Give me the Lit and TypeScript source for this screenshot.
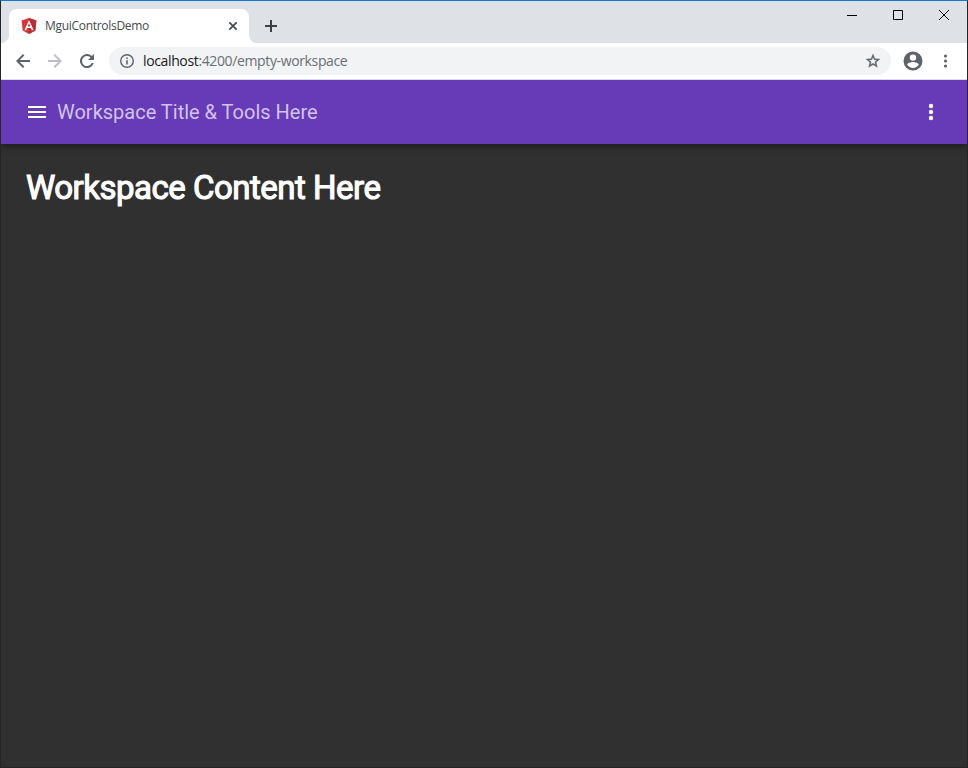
import { LitElement, html, css } from "lit";
import { customElement } from "lit/decorators.js";

@customElement("browser-tabs")
class BrowserTabs extends LitElement {
  static styles = css`
    :host { display: flex; height: 42px; background: #dee1e6; font-family: "Open Sans", "Noto Sans", sans-serif; }
    .tab { position: relative; box-sizing: border-box; width: 240px; height: 34px; margin: 8px 0 0 8px; padding: 0 10px 0 12px;
      display: flex; align-items: center; background: #fff; border-radius: 8px 8px 0 0; }
    .tab::before, .tab::after { content: ""; position: absolute; bottom: 0; width: 8px; height: 8px; }
    .tab::before { left: -8px; background: radial-gradient(circle at 0 0, transparent 7.5px, #fff 8.5px); }
    .tab::after { right: -8px; background: radial-gradient(circle at 100% 0, transparent 7.5px, #fff 8.5px); }
    .title { flex: 1; margin-left: 8px; font-size: 12px; letter-spacing: -0.3px; color: #45494d; line-height: 16px; white-space: nowrap; }
    svg { display: block; flex: none; }
    .new { margin: 19px 0 0 16px; }
    .controls { margin-left: auto; display: flex; height: 28px; }
    .controls span { width: 46px; display: grid; place-items: center; }
  `;
  render() {
    return html`
      <div class="tab">
        <svg width="16" height="16" viewBox="0 0 16 16">
          <path fill="#dd3237" d="M8 0 15.4 2.6 14.3 12.5 8 16 1.7 12.5.6 2.6z" />
          <path fill="#bd2b33" d="M8 0v16l6.3-3.5 1.1-9.9z" />
          <path fill="#fff" d="M8 1.9 3.4 12.3h1.8l.9-2.3h3.8l.9 2.3h1.8zm0 3.4 1.3 3.2H6.7z" />
        </svg>
        <span class="title">MguiControlsDemo</span>
        <svg width="12" height="12" viewBox="0 0 12 12" stroke="#45494d" stroke-width="1.7"><path d="M2.300 2.300l7.400 7.400M9.700 2.300l-7.400 7.400" /></svg>
      </div>
      <svg class="new" width="12" height="12" viewBox="0 0 12 12" fill="#3c4043"><path d="M5 0h2v5h5v2H7v5H5V7H0V5h5z" /></svg>
      <div class="controls">
        <span><svg width="10" height="10" viewBox="0 0 10 10"><path fill="#000" d="M0 5h10v1H0z" /></svg></span>
        <span><svg width="10" height="10" viewBox="0 0 10 10"><path fill="none" stroke="#000" d="M.5.5h9v9h-9z" /></svg></span>
        <span><svg width="10" height="10" viewBox="0 0 10 10"><path stroke="#000" d="M0 0l10 10M10 0L0 10" /></svg></span>
      </div>`;
  }
}

@customElement("browser-toolbar")
class BrowserToolbar extends LitElement {
  static styles = css`
    :host { display: flex; align-items: center; box-sizing: border-box; height: 37px; padding: 0 14px 0 14px; background: #fff;
      border-bottom: 1px solid #dadce0; font-family: "Open Sans", "Noto Sans", sans-serif; }
    svg { display: block; flex: none; fill: #5f6368; }
    .nav { display: flex; gap: 16px; }
    .nav .off { fill: #bcbec1; }
    .box { flex: 1; display: flex; align-items: center; box-sizing: border-box; height: 28px; margin: 0 12px 0 14px; padding: 0 10px; border-radius: 14px; background: #f1f3f4; }
    .url { flex: 1; margin-left: 8px; font-size: 14px; letter-spacing: -0.365px; line-height: 18px; color: #6b6f73; white-space: nowrap; }
    .host { color: #202124; }
    .more { margin-left: 14px; }
  `;
  render() {
    return html`
      <div class="nav">
        <svg width="16" height="16" viewBox="0 0 16 16"><path d="M15 7H4.8l4.6-4.6L8 1 1 8l7 7 1.4-1.4L4.8 9H15z" /></svg>
        <svg class="off" width="16" height="16" viewBox="0 0 16 16"><path d="M1 7h10.2L6.6 2.4 8 1l7 7-7 7-1.4-1.4L11.2 9H1z" /></svg>
        <svg width="16" height="16" viewBox="0 0 16 16"><path d="M12.9 3.1A7 7 0 1 0 14.7 10h-2.1A5 5 0 1 1 11.5 4.5L9 7h6V1z" /></svg>
      </div>
      <div class="box">
        <svg width="16" height="16" viewBox="0 0 16 16"><path fill-rule="evenodd" d="M8 1a7 7 0 1 0 0 14A7 7 0 0 0 8 1zm0 1.4a5.6 5.6 0 1 1 0 11.2A5.6 5.6 0 0 1 8 2.400zM7.200 4.400h1.600V6H7.200zm0 2.800h1.600v4.400H7.200z" /></svg>
        <span class="url"><span class="host">localhost</span>:4200/empty-workspace</span>
        <svg width="16" height="16" viewBox="0 0 24 24"><path d="M22.500 9.100l-7.500-.65L12 1.500 9 8.450l-7.500.65 5.700 4.950L5.500 21.500 12 17.500l6.500 4-1.700-7.450zM12 15.300l-3.800 2.300 1-4.300-3.300-2.900 4.400-.4L12 6l1.700 4 4.400.4-3.300 2.900 1 4.300z" stroke="#5f6368" stroke-width=".5" /></svg>
      </div>
      <svg width="20" height="20" viewBox="0 0 20 20"><path fill-rule="evenodd" d="M10 .5a9.500 9.500 0 1 0 0 19 9.500 9.500 0 0 0 0-19zm0 2.900a3.200 3.200 0 1 1 0 6.400 3.200 3.200 0 0 1 0-6.400zm0 13.500c-2.400 0-4.500-1.200-5.700-3.100 0-1.800 3.800-2.700 5.700-2.700s5.700.9 5.700 2.700A6.800 6.800 0 0 1 10 16.900z" /></svg>
      <svg class="more" width="16" height="16" viewBox="0 0 16 16"><circle cx="8.500" cy="3" r="1.600" /><circle cx="8.500" cy="8" r="1.600" /><circle cx="8.500" cy="13" r="1.600" /></svg>`;
  }
}

@customElement("workspace-page")
class WorkspacePage extends LitElement {
  static styles = css`
    :host { flex: 1; display: flex; flex-direction: column; background: #303030; font-family: Roboto, sans-serif; overflow: hidden; }
    header { display: flex; align-items: center; height: 64px; flex: none; box-sizing: border-box; padding: 0 24px; background: #673ab7;
      box-shadow: 0 2px 4px -1px rgba(0,0,0,.2), 0 4px 5px rgba(0,0,0,.14), 0 1px 10px rgba(0,0,0,.12); }
    svg { display: block; fill: #fff; }
    .title { flex: 1; margin-left: 8px; font-size: 20px; line-height: 24px; color: #d1c4e9; }
    h1 { margin: 24px 25px; font-size: 33px; letter-spacing: -0.5px; line-height: 40px; font-weight: 400; color: #fff; -webkit-text-stroke: 1.100px #fff; }
  `;
  render() {
    return html`
      <header>
        <svg width="24" height="24" viewBox="0 0 24 24"><path d="M3 18h18v-2H3zm0-5h18v-2H3zm0-7v2h18V6z" /></svg>
        <span class="title">Workspace Title &amp; Tools Here</span>
        <svg width="24" height="24" viewBox="0 0 24 24"><circle cx="12" cy="6" r="2.200" /><circle cx="12" cy="12" r="2.200" /><circle cx="12" cy="18" r="2.200" /></svg>
      </header>
      <h1>Workspace Content Here</h1>`;
  }
}

@customElement("app-root")
class AppRoot extends LitElement {
  static styles = css`
    :host { display: flex; flex-direction: column; box-sizing: border-box; width: 968px; height: 768px; border: 1px solid #242424; border-top-color: #1979d2; overflow: hidden; }
  `;
  render() {
    return html`<browser-tabs></browser-tabs><browser-toolbar></browser-toolbar><workspace-page></workspace-page>`;
  }
}
